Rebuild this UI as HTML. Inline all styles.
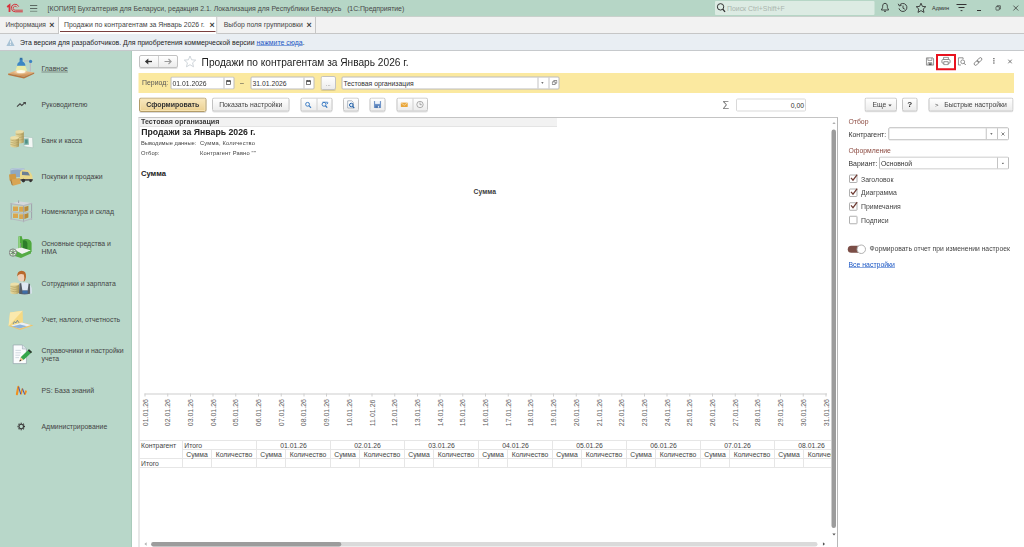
<!DOCTYPE html>
<html lang="ru"><head><meta charset="utf-8"><title>Продажи по контрагентам</title>
<style>
*{box-sizing:border-box;margin:0;padding:0}
html,body{width:1024px;height:547px;overflow:hidden;background:#fff}
body{font-family:"Liberation Sans",Arial,sans-serif;font-size:6.9px;color:#333;position:relative;line-height:1}
.a{position:absolute;white-space:nowrap}
.t{position:absolute;white-space:nowrap;line-height:10px;height:10px}
#titlebar{left:0;top:0;width:1024px;height:16px;background:#b6d6c6}
#tabbar{left:0;top:16px;width:1024px;height:18px;background:#f2f2f2;border-top:1px solid #c9d1cc;border-bottom:1px solid #c6c6c6}
#infobar{left:0;top:34px;width:1024px;height:17px;background:#e9eef3;border-bottom:1px solid #c6c9cc}
#side{left:0;top:51px;width:132px;height:496px;background:#b8d7c9;border-right:1px solid #a9cbbb}
.btn{position:absolute;height:14px;font-size:6.83px;border:1px solid #c2c2c2;border-radius:2px;background:linear-gradient(#ffffff,#ececec);box-shadow:0 1px 0 rgba(0,0,0,.12);text-align:center;line-height:12px;color:#444;white-space:nowrap}
.inp{position:absolute;height:13px;border:1px solid #bcbcbc;border-radius:1.5px;background:#fff;line-height:11.8px;padding-left:1px;color:#333;white-space:nowrap;font-size:6.8px}
.vd{position:absolute;top:0;width:1px;height:100%;background:#c4c4c4}
.sec{color:#333}
#root{position:absolute;left:0;top:0;width:1024px;height:547px;overflow:hidden}
@supports (zoom:4){#root{zoom:4;transform:scale(.25);transform-origin:0 0}}
</style></head><body><div id="root">

<!-- title bar -->
<div id="titlebar" class="a"></div>
<svg class="a" style="left:0;top:0" width="26" height="16" viewBox="0 0 26 16"><g fill="none" stroke="#d8323c"><path d="M7.2 7 L9.5 5.2 V12.1" stroke-width="1.8"/><path d="M18.7 6.6 A3.8 3.8 0 1 0 15.2 11.8 H22.8" stroke-width="1"/><path d="M17 7.4 A2 2 0 1 0 15.2 10.2 H22.8" stroke-width=".9"/></g></svg>
<div class="a" style="left:30px;top:5px;width:7.3px;height:.9px;background:#5b6a63;box-shadow:0 3px 0 #5b6a63,0 5.8px 0 #7d9186"></div>
<div class="t" style="left:47.5px;top:4px;font-size:6.95px;color:#484848;white-space:pre">[КОПИЯ] Бухгалтерия для Беларуси, редакция 2.1. Локализация для Республики Беларусь   <span style="letter-spacing:-.08px">(1С:Предприятие)</span></div>
<div class="a" style="left:715px;top:1px;width:159.5px;height:14px;background:#dcebe3;border-radius:1px"></div>
<svg class="a" style="left:716.2px;top:2.3px" width="10" height="11" viewBox="0 0 10 11"><circle cx="4.3" cy="4.6" r="3.2" fill="none" stroke="#333" stroke-width="1"/><path d="M6.6 7 L8.8 9.6" stroke="#333" stroke-width="1.3"/></svg>
<div class="t" style="left:727px;top:3.4px;font-size:6.9px;color:#a9b5ae">Поиск Ctrl+Shift+F</div>
<!-- right title icons -->
<svg class="a" style="left:880px;top:2px" width="10" height="12" viewBox="0 0 10 12"><path d="M5 1.3 C2.6 1.3 2.6 4 2.6 5.6 L1.4 8 H8.6 L7.4 5.6 C7.4 4 7.4 1.3 5 1.3 Z M4 9.3 H6" fill="none" stroke="#333" stroke-width=".9"/></svg>
<svg class="a" style="left:897px;top:2px" width="12" height="12" viewBox="0 0 12 12"><path d="M2.6 3.2 A4 4 0 1 1 2 6.4" fill="none" stroke="#333" stroke-width=".9"/><path d="M1.2 1.8 L2.4 4 L4.6 3.2" fill="none" stroke="#333" stroke-width=".9"/><path d="M6 3.6 V6.2 L7.8 7.2" fill="none" stroke="#333" stroke-width=".9"/></svg>
<svg class="a" style="left:915px;top:2px" width="12" height="12" viewBox="0 0 12 12"><path d="M6 1.2 L7.4 4.4 L10.8 4.7 L8.2 7 L9 10.4 L6 8.6 L3 10.4 L3.8 7 L1.2 4.7 L4.6 4.4 Z" fill="none" stroke="#333" stroke-width=".9" stroke-linejoin="round"/></svg>
<div class="t" style="left:932px;top:3.5px;font-size:5.6px;color:#333">Админ</div>
<svg class="a" style="left:956px;top:3px" width="11" height="10" viewBox="0 0 11 10"><path d="M0.5 1.5 H10.5 M2.5 4.5 H8.5 M4.6 7.6 H6.4" stroke="#333" stroke-width="1" fill="none"/></svg>
<div class="a" style="left:977px;top:10px;width:4px;height:1px;background:#333"></div>
<svg class="a" style="left:995.3px;top:5px" width="6" height="6" viewBox="0 0 8 8"><rect x=".8" y="2.2" width="4.6" height="4.6" fill="none" stroke="#333" stroke-width=".9" rx=".8"/><path d="M2.4 2 V1 H6.8 V5.4 H5.8" fill="none" stroke="#333" stroke-width=".9"/></svg>
<svg class="a" style="left:1012.6px;top:4.8px" width="6.6" height="6.6" viewBox="0 0 8 8"><path d="M1 1 L7 7 M7 1 L1 7" stroke="#333" stroke-width=".9"/></svg>

<!-- tab bar -->
<div id="tabbar" class="a"></div>
<div class="t" style="left:5.5px;top:20px;font-size:6.6px;color:#444">Информация</div>
<div class="t" style="left:49.5px;top:20px;font-size:8.8px;color:#3c3c3c;font-weight:bold;margin-left:-.2px;margin-top:-.3px">×</div>
<div class="a" style="left:58px;top:17px;width:159.2px;height:17px;background:#fff;border-left:1px solid #c6c6c6;border-right:1px solid #c6c6c6"></div>
<div class="a" style="left:60px;top:31px;width:155.6px;height:1px;background:#7a3f3f"></div>
<div class="t" style="left:64px;top:20px;font-size:6.9px;color:#444">Продажи по контрагентам за Январь 2026 г.</div>
<div class="t" style="left:209.6px;top:20px;font-size:8.8px;color:#3c3c3c;font-weight:bold;margin-left:-.2px;margin-top:-.3px">×</div>
<div class="t" style="left:223.7px;top:20px;font-size:6.87px;color:#444">Выбор поля группировки</div>
<div class="t" style="left:306.8px;top:20px;font-size:8.8px;color:#3c3c3c;font-weight:bold;margin-left:-.2px;margin-top:-.3px">×</div>
<div class="a" style="left:315px;top:17px;width:1px;height:16px;background:#c6c6c6"></div>

<!-- info bar -->
<div id="infobar" class="a"></div>
<svg class="a" style="left:6px;top:37.8px" width="9" height="9" viewBox="0 0 9 9"><path d="M4.5 .6 L8.6 8.2 H.4 Z" fill="#a9c3d6"/><path d="M4.5 3 V5.6 M4.5 6.4 V7.3" stroke="#e9eef3" stroke-width="1"/></svg>
<div class="t" style="left:19.9px;top:37.8px;font-size:6.92px;color:#222">Эта версия для разработчиков. Для приобретения коммерческой версии <span style="color:#1a56c4;text-decoration:underline">нажмите сюда</span>.</div>

<!-- sidebar -->
<div id="side" class="a"></div>
<!--SIDE--><!-- sidebar items -->
<!-- 1 lamp -->
<svg class="a" style="left:7px;top:56px" width="29" height="24" viewBox="0 0 29 24">
<defs><linearGradient id="gw" x1="0" y1="0" x2="0" y2="1"><stop offset="0" stop-color="#f2c99a"/><stop offset="1" stop-color="#c98a4e"/></linearGradient>
<radialGradient id="gl" cx=".5" cy=".4" r=".6"><stop offset="0" stop-color="#fffbe8"/><stop offset="1" stop-color="#f1c795" stop-opacity="0"/></radialGradient></defs>
<path d="M1.2 17.4 L10.5 13.8 L27.2 16.4 L17 20.8 Z" fill="url(#gw)"/>
<path d="M1.2 17.4 L17 20.8 L27.2 16.4 L27.2 17.8 L17 22.6 L1.2 18.9 Z" fill="#b9763f"/>
<ellipse cx="13.5" cy="16.6" rx="7" ry="2.4" fill="url(#gl)"/>
<path d="M8.4 14.6 L10.4 9.6 H18 L20.2 14.6 Q14 16.4 8.4 14.6Z" fill="#f6f0a0" opacity=".8"/>
<ellipse cx="14" cy="15.6" rx="4.5" ry="1.5" fill="#fffdf0" opacity=".9"/>
<path d="M17 5 H23.4 V15.4" fill="none" stroke="#b9bcc2" stroke-width="1.2"/>
<path d="M12.6 3.2 H15.6 V5.4 Q18.4 6.6 18.4 9.8 H10 Q10 6.6 12.6 5.4 Z" fill="#3c86c4"/>
<rect x="12.8" y="1.8" width="2.6" height="2" fill="#2f6fa8"/>
<circle cx="23.6" cy="5.4" r="1.6" fill="#3b83c2"/>
</svg>
<div class="t" style="left:41.5px;top:64px;color:#444;text-decoration:underline">Главное</div>
<!-- 2 trend -->
<svg class="a" style="left:16px;top:101px" width="11" height="7" viewBox="0 0 11 7"><path d="M1 5.6 L4 2.8 L5.8 4.4 L9.2 1.4" fill="none" stroke="#444" stroke-width="1.1"/><path d="M6.8 .9 H9.9 V3.8 Z" fill="#444"/></svg>
<div class="t" style="left:41.5px;top:99.8px;color:#444">Руководителю</div>
<!-- 3 coins -->
<svg class="a" style="left:9px;top:129px" width="26" height="20" viewBox="0 0 26 20">
<defs><linearGradient id="gc" x1="0" y1="0" x2="1" y2="0"><stop offset="0" stop-color="#e6d9a0"/><stop offset=".6" stop-color="#d3c282"/><stop offset="1" stop-color="#a9975a"/></linearGradient></defs>
<path d="M14.6 8 L23.6 8.6 L24 18.8 L15 17.6 Z" fill="#f3f7f5" stroke="#9fb8b0" stroke-width=".5"/>
<path d="M14.6 9.6 L19.6 9.2 L20 15.8 L15 16.2Z" fill="#8dbdb2"/><path d="M16 10.6 L18.6 10.4 L18.8 14.6 L16.2 14.8Z" fill="#4f8f86"/>
<path d="M6.6 2.4 V13.6 Q10.6 15.6 14.8 13.6 V2.4Z" fill="url(#gc)"/>
<ellipse cx="10.7" cy="2.4" rx="4.1" ry="1.5" fill="#e9dca6"/>
<path d="M6.6 5 Q10.7 6.8 14.8 5 M6.6 7.6 Q10.7 9.4 14.8 7.6 M6.6 10.2 Q10.7 12 14.8 10.2" fill="none" stroke="#a9975a" stroke-width=".5"/>
<path d="M1.4 8.6 V17.4 Q5.6 19.6 10 17.4 V8.6Z" fill="url(#gc)"/>
<ellipse cx="5.7" cy="8.6" rx="4.3" ry="1.6" fill="#ecdfa9"/>
<path d="M1.4 11 Q5.7 13 10 11 M1.4 13.2 Q5.7 15.2 10 13.2 M1.4 15.4 Q5.7 17.4 10 15.4" fill="none" stroke="#a9975a" stroke-width=".5"/>
</svg>
<div class="t" style="left:41.5px;top:135.5px;color:#444">Банк и касса</div>
<!-- 4 truck -->
<svg class="a" style="left:8px;top:166px" width="27" height="21" viewBox="0 0 27 21">
<path d="M2.4 3 Q9 1 16.4 2.6 V11 H2.4Z" fill="#8fa9c4"/>
<path d="M2.4 3 Q9 1 16.4 2.6 V4.2 Q9 2.8 2.4 4.4Z" fill="#b9cadb"/>
<path d="M12 6 Q13 3.6 17 3.8 L21 4.4 Q23.4 7.6 24.4 10 L24.6 14.4 L12 13.6Z" fill="#e9d88a"/>
<path d="M14 5.6 L20 6 L22 9.4 L14 9Z" fill="#6b7f94"/>
<rect x="12.4" y="13" width="12.4" height="1.8" fill="#555"/>
<circle cx="15.4" cy="14.6" r="1.8" fill="#333"/><circle cx="22.6" cy="14.8" r="1.4" fill="#333"/>
<path d="M1 8.6 L7.6 7.8 L8.6 13.4 L1.6 14.4Z" fill="#cf9a48"/>
<path d="M3.4 13.4 L11.6 12 L13 17.6 L5 19.8Z" fill="#d9a552"/>
<path d="M3.4 13.4 L5 19.8 L3.6 18.4 L2.2 14Z" fill="#a87530"/>
</svg>
<div class="t" style="left:41.5px;top:171.3px;color:#444">Покупки и продажи</div>
<!-- 5 shelf -->
<svg class="a" style="left:9px;top:200px" width="24" height="23" viewBox="0 0 24 23">
<path d="M1.4 3.2 L14.6 5.2 L23 3 L11 1.6Z" fill="#d5d8dc"/>
<g fill="#d9a64e"><path d="M4 6.6 H9 V11 H4Z M10.2 7 H15.6 V11.8 H10.2Z M4 13.6 H9 V18 H4Z M10.2 14.2 H15.6 V19 H10.2Z"/></g>
<g fill="#e9c27a"><path d="M4 6.6 L5.4 5.8 H10 L9 6.6Z M10.2 7 L11.6 6.2 H17 L15.6 7Z M4 13.6 L5.4 12.8 H10 L9 13.6Z M10.2 14.2 L11.6 13.4 H17 L15.6 14.2Z"/></g>
<g fill="#b98a3a"><path d="M15.6 7 L19.4 5.8 V10.4 L15.6 11.8Z M15.6 14.2 L19.4 13 V17.4 L15.6 19Z"/></g>
<g fill="none" stroke="#9ea3aa" stroke-width="1"><path d="M2.2 3 V19.4 M14.6 5 V22.2 M22.6 3 V19.6 M9.6 .4 V3"/></g>
<g fill="none" stroke="#b5b9bf" stroke-width="1.1"><path d="M1.4 3.6 L14.6 5.6 L23 3.4 M1.4 11.6 L14.6 13.4 L23 11.2 M1.4 18.8 L14.6 21.2 L23 18.6"/></g>
</svg>
<div class="t" style="left:41.5px;top:207px;color:#444">Номенклатура и склад</div>
<!-- 6 machine -->
<svg class="a" style="left:9px;top:235px" width="24" height="24" viewBox="0 0 24 24">
<path d="M9.4 1.6 L12.6 1 L13.6 4.6 L16 4 Q21.6 3.4 22.6 8 V17 L14 16.6 L9.4 14Z" fill="#4fa83e"/>
<path d="M9.4 1.6 L11 1.4 V14 L9.4 14Z" fill="#8fd17f"/>
<path d="M14 5.6 Q17.6 4.6 18.4 8 V14 H14Z" fill="#2e7d2a"/>
<path d="M5 14.6 L12 12.6 L22 15.6 L13 19Z" fill="#f1f3f1"/>
<path d="M5 14.6 L13 19 L22 15.6 V18.4 L12 23 L4 20.6Z" fill="#55ab45"/>
<circle cx="4" cy="17.6" r="3.7" fill="#e4e8e4" stroke="#6f6f6f" stroke-width=".8"/>
<path d="M4 14.4 V20.8 M1.2 16 L6.8 19.2 M1.2 19.2 L6.8 16" stroke="#4a8a44" stroke-width=".8"/><circle cx="4" cy="17.6" r="1" fill="#777"/>
<path d="M11.6 8 V13" stroke="#9a9a9a" stroke-width=".8"/>
</svg>
<div class="t" style="left:41.5px;top:238.8px;color:#444">Основные средства и</div>
<div class="t" style="left:41.5px;top:246.8px;color:#444">НМА</div>
<!-- 7 person -->
<svg class="a" style="left:9px;top:270px" width="24" height="26" viewBox="0 0 24 26">
<path d="M8.4 14.6 Q9.6 12.4 12.6 12.4 H16.4 Q21.6 13 22.6 18 L22.8 23.4 Q16 25.4 8.8 23.6Z" fill="#dfe8f3"/>
<path d="M10.4 13.4 L12.2 13 L13.4 20.6 H18.6 L19.6 13.4 L21 14 L21.2 23.8 Q15.6 25 10 23.8Z" fill="#555d66"/>
<path d="M13.4 20.6 H18.6 V23.6 H13.4Z" fill="#3f6ea8"/>
<ellipse cx="12.4" cy="7" rx="3.7" ry="4.6" fill="#f0cfb6"/>
<path d="M8.2 6.4 Q8 1.2 12.6 .8 Q17.4 .8 17 7 Q16.6 11 14.6 12.2 Q16 8 14.8 4.6 Q11.6 3.2 9.4 5 Z" fill="#b9692c"/>
<path d="M1.4 14 V23.2 Q5.6 25.4 10 23.2 V14Z" fill="url(#gc)"/>
<ellipse cx="5.7" cy="14" rx="4.3" ry="1.6" fill="#ecdfa9"/>
<path d="M1.4 16.4 Q5.7 18.4 10 16.4 M1.4 18.6 Q5.7 20.6 10 18.6 M1.4 20.8 Q5.7 22.8 10 20.8" fill="none" stroke="#a9975a" stroke-width=".5"/>
</svg>
<div class="t" style="left:41.5px;top:278.6px;color:#444">Сотрудники и зарплата</div>
<!-- 8 folder -->
<svg class="a" style="left:7px;top:310px" width="28" height="21" viewBox="0 0 28 21">
<path d="M3 2.6 L15.6 .8 L16 12.4 L1.6 16Z" fill="#f6d982"/>
<path d="M3 2.6 L15.6 .8 L9 8 L1.6 16Z" fill="#fae9ad"/>
<path d="M1.6 16 L16 12.4 L26.4 15.4 L13 20Z" fill="#eec56c"/>
<path d="M4 15.4 L15 12.6 L24 15 L12.6 18.6Z" fill="#e9f0f7"/>
<path d="M5 16.4 L12.6 18.6 L20 16.2 L13 14.6Z" fill="#8fb3d9"/>
<path d="M6 14 L7.4 11.6 L8.8 13 L10.4 10.4 L12 12.8" fill="none" stroke="#46709f" stroke-width=".7"/>
</svg>
<div class="t" style="left:41.5px;top:314.4px;color:#444">Учет, налоги, отчетность</div>
<!-- 9 doc pencil -->
<svg class="a" style="left:12px;top:344px" width="21" height="21" viewBox="0 0 21 21">
<path d="M1.2 1 H10.4 L14.4 5 V19.6 H1.2Z" fill="#fafcfd" stroke="#8d9aa6" stroke-width=".6"/>
<path d="M10.4 1 V5 H14.4" fill="#dfe6ec" stroke="#8d9aa6" stroke-width=".5"/>
<path d="M3.4 6.4 H9 M3.4 8.8 H9 M3.4 11.2 H8 M3.4 13.6 H7" stroke="#c2ccd6" stroke-width=".7"/>
<path d="M17 5.2 L20 8 L11.6 16 L8.6 13.2Z" fill="#35a64a"/>
<path d="M17 5.2 L20 8 L18.8 9.2 L15.8 6.4Z" fill="#333"/>
<path d="M8.6 13.2 L11.6 16 L7.4 17.4Z" fill="#e9c48d"/>
<path d="M7.4 17.4 L8 15.4 L9.4 16.8Z" fill="#333"/>
</svg>
<div class="t" style="left:41.5px;top:346px;color:#444">Справочники и настройки</div>
<div class="t" style="left:41.5px;top:354px;color:#444">учета</div>
<!-- 10 PS -->
<svg class="a" style="left:15px;top:385px" width="13" height="11" viewBox="0 0 13 11">
<g fill="none" stroke-linecap="round"><path d="M1.9 9.2 L3.3 1.9" stroke="#f0901e" stroke-width="2.1"/><path d="M5.9 8.8 L7.4 4" stroke="#f0901e" stroke-width="1.7"/><path d="M9.9 9 L10.9 6.4" stroke="#f0901e" stroke-width="2"/>
<path d="M3.7 2.2 L5.6 8.8" stroke="#4455b0" stroke-width="1"/><path d="M7.6 4 L9.4 8.8" stroke="#4455b0" stroke-width="1"/></g>
</svg>
<div class="t" style="left:41.5px;top:386px;color:#444">PS: База знаний</div>
<!-- 11 gear -->
<svg class="a" style="left:16.8px;top:422.1px" width="9" height="9" viewBox="0 0 9 9"><circle cx="4.5" cy="4.5" r="2.25" fill="none" stroke="#3c3c3c" stroke-width="1.1"/><path d="M7.20 4.50 L8.25 4.50 M6.41 6.41 L7.15 7.15 M4.50 7.20 L4.50 8.25 M2.59 6.41 L1.85 7.15 M1.80 4.50 L0.75 4.50 M2.59 2.59 L1.85 1.85 M4.50 1.80 L4.50 0.75 M6.41 2.59 L7.15 1.85" stroke="#3c3c3c" stroke-width="1.35" fill="none"/></svg>
<div class="t" style="left:41.5px;top:421.5px;color:#444">Администрирование</div>
<!--/SIDE-->

<!-- main header -->
<!--MAIN--><!-- main header -->
<div class="btn" style="left:139px;top:55px;width:39px;height:13px"></div>
<div class="a" style="left:158px;top:56px;width:1px;height:11px;background:#d0d0d0"></div>
<svg class="a" style="left:144px;top:58px" width="9" height="7" viewBox="0 0 9 7"><path d="M8 3.5 H2.6" fill="none" stroke="#333" stroke-width="1.3"/><path d="M4.3 .6 L.9 3.5 L4.3 6.4Z" fill="#333"/></svg>
<svg class="a" style="left:163.5px;top:58px" width="9" height="7" viewBox="0 0 9 7"><path d="M1 3.5 H7.4 M5 1 L7.6 3.5 L5 6" fill="none" stroke="#9a9a9a" stroke-width="1.1"/></svg>
<svg class="a" style="left:183.5px;top:55px" width="13" height="13" viewBox="0 0 13 13"><path d="M6.5 1 L8.1 4.8 L12.2 5.1 L9.1 7.8 L10 11.8 L6.5 9.7 L3 11.8 L3.9 7.8 L.8 5.1 L4.9 4.8 Z" fill="none" stroke="#c3cad1" stroke-width=".8" stroke-linejoin="round"/></svg>
<div class="a" style="left:201.6px;top:54.9px;font-size:10.15px;line-height:14px;color:#1c1c1c">Продажи по контрагентам за Январь 2026 г.</div>

<!-- top right icons -->
<svg class="a" style="left:925.5px;top:57px" width="9" height="9" viewBox="0 0 9 9"><path d="M.9 .9 H7.4 L8.1 1.6 V8.1 H.9Z" fill="none" stroke="#767676" stroke-width=".8"/><path d="M2.4 .9 V3.4 H6.4 V.9 M2.6 8 V5.6 H6.4 V8" fill="none" stroke="#767676" stroke-width=".7"/><rect x="3.4" y="6.3" width="2.6" height="1.8" fill="#555"/></svg>
<div class="a" style="left:936px;top:54px;width:20px;height:16.2px;border:2.2px solid #e8131f"></div>
<svg class="a" style="left:941px;top:56.5px" width="10" height="9" viewBox="0 0 10 9"><path d="M2.6 3 V.8 H7.4 V3" fill="none" stroke="#767676" stroke-width=".8"/><rect x=".9" y="3" width="8.2" height="3.8" rx="1.2" fill="none" stroke="#767676" stroke-width=".8"/><path d="M2.8 5.2 H7.2 V8.2 H2.8Z" fill="#fff" stroke="#767676" stroke-width=".8"/></svg>
<svg class="a" style="left:957.5px;top:57px" width="9" height="9" viewBox="0 0 9 9"><path d="M5.6 .8 H.9 V8 H3.4" fill="none" stroke="#767676" stroke-width=".8"/><path d="M5.6 .8 V2" fill="none" stroke="#767676" stroke-width=".8"/><circle cx="5.2" cy="4.8" r="1.9" fill="none" stroke="#767676" stroke-width=".8"/><path d="M6.6 6.2 L8.2 8" stroke="#767676" stroke-width=".9"/></svg>
<svg class="a" style="left:973px;top:56.5px" width="10" height="10" viewBox="0 0 10 10"><g fill="none" stroke="#777" stroke-width=".85"><rect x="-2.7" y="-1.45" width="5.4" height="2.9" rx="1.45" transform="translate(6.5 3.5) rotate(-45)"/><rect x="-2.7" y="-1.45" width="5.4" height="2.9" rx="1.45" transform="translate(3.5 6.5) rotate(-45)"/></g></svg>
<div class="a" style="left:993.3px;top:58px;width:1.2px;height:1.3px;background:#555;box-shadow:0 2.2px 0 #555,0 4.4px 0 #555"></div>
<svg class="a" style="left:1007.5px;top:59px" width="5" height="5" viewBox="0 0 5 5"><path d="M.6 .6 L4.4 4.4 M4.4 .6 L.6 4.4" stroke="#555" stroke-width=".8"/></svg>

<!-- yellow band -->
<div class="a" style="left:138.5px;top:73px;width:875.5px;height:20px;background:#fbe9a0"></div>
<div class="t" style="left:142px;top:78px;color:#555">Период:</div>
<div class="inp" style="left:170.5px;top:76.5px;width:64px">01.01.2026<div class="vd" style="left:52px"></div></div>
<svg class="a" style="left:226px;top:79.7px" width="5.2" height="5.2" viewBox="0 0 6 6"><rect x=".7" y="1.2" width="4.6" height="4.1" fill="none" stroke="#444" stroke-width=".8"/><rect x=".7" y="1" width="4.6" height="1.4" fill="#444"/><path d="M1.8 .2 V1.4 M4.2 .2 V1.4" stroke="#444" stroke-width=".7"/></svg>
<div class="t" style="left:240px;top:78px;color:#444">–</div>
<div class="inp" style="left:250.5px;top:76.5px;width:64px">31.01.2026<div class="vd" style="left:52px"></div></div>
<svg class="a" style="left:306px;top:79.7px" width="5.2" height="5.2" viewBox="0 0 6 6"><rect x=".7" y="1.2" width="4.6" height="4.1" fill="none" stroke="#444" stroke-width=".8"/><rect x=".7" y="1" width="4.6" height="1.4" fill="#444"/><path d="M1.8 .2 V1.4 M4.2 .2 V1.4" stroke="#444" stroke-width=".7"/></svg>
<div class="btn" style="left:320.5px;top:76px;width:15.5px;line-height:13px;color:#666;font-size:6px">...</div>
<div class="inp" style="left:341.5px;top:76.5px;width:218px">Тестовая организация<div class="vd" style="left:195px"></div><div class="vd" style="left:206px"></div></div>
<svg class="a" style="left:541.1px;top:82.0px" width="2.8" height="2.1" viewBox="0 0 4 3"><path d="M.3 .4 H3.7 L2 2.6Z" fill="#444"/></svg>
<svg class="a" style="left:551.8px;top:80px" width="5.8" height="5" viewBox="0 0 7 6"><path d="M.6 2.2 H4.2 V5.4 H.6Z M2.4 2 V.6 H6.2 V3.8 H4.4" fill="none" stroke="#444" stroke-width=".7"/></svg>

<!-- command bar -->
<div class="btn" style="left:139px;top:97.5px;width:67.5px;height:14.5px;border-color:#b39c68;background:linear-gradient(#f9e9c0,#ebd092);color:#333;font-weight:bold;font-size:6.97px;line-height:12.5px;box-shadow:inset 0 0 0 1px #f7e3b0,0 1px 0 rgba(0,0,0,.15)">Сформировать</div>
<div class="btn" style="left:212px;top:97.5px;width:77.5px">Показать настройки</div>
<div class="btn" style="left:300.5px;top:97.5px;width:32px"></div>
<div class="a" style="left:316.5px;top:98.5px;width:1px;height:12px;background:#d0d0d0"></div>
<svg class="a" style="left:304.8px;top:101.4px" width="7" height="7" viewBox="0 0 8 8"><circle cx="3.2" cy="3.2" r="2.2" fill="none" stroke="#2f74c0" stroke-width="1"/><path d="M4.8 4.8 L7.2 7.2" stroke="#2f74c0" stroke-width="1.3"/></svg>
<svg class="a" style="left:321px;top:101.2px" width="8" height="7.2" viewBox="0 0 9 8"><circle cx="3.4" cy="3.4" r="2.2" fill="none" stroke="#2f74c0" stroke-width="1"/><path d="M5 5 L7 7.2" stroke="#2f74c0" stroke-width="1.3"/><path d="M1.6 .9 H7.4" stroke="#2f74c0" stroke-width=".9"/><path d="M6 1.4 H8.4 L7.2 3.2Z" fill="#2f74c0"/></svg>
<div class="btn" style="left:343px;top:97.5px;width:16px"></div>
<svg class="a" style="left:346.5px;top:100px" width="9" height="9" viewBox="0 0 9 9"><path d="M1.2 .8 H5.2 L6.8 2.4 V8 H1.2Z" fill="#fff" stroke="#8a97a6" stroke-width=".7"/><circle cx="4.8" cy="5" r="1.8" fill="#dbe9f7" stroke="#1f5fa8" stroke-width="1"/><path d="M6.1 6.3 L7.8 8.2" stroke="#1f5fa8" stroke-width="1.2"/></svg>
<div class="btn" style="left:369.5px;top:97.5px;width:16px"></div>
<svg class="a" style="left:373.5px;top:100.5px" width="8" height="8" viewBox="0 0 8 8"><rect x=".4" y=".4" width="7.2" height="7.2" rx=".6" fill="#6f94c8"/><rect x="1.6" y=".4" width="4.8" height="3" fill="#eef3fa"/><rect x="1.8" y="5" width="4.4" height="2.6" fill="#4f78b2"/><rect x="4.4" y="5.4" width="1.2" height="1.8" fill="#dfe7f2"/></svg>
<div class="btn" style="left:396.5px;top:97.5px;width:31.5px"></div>
<div class="a" style="left:412.5px;top:98.5px;width:1px;height:12px;background:#d0d0d0"></div>
<svg class="a" style="left:400.2px;top:102.2px" width="8" height="5" viewBox="0 0 9 6"><rect x=".3" y=".3" width="8.4" height="5.4" rx=".5" fill="#e9a63a"/><path d="M.6 .8 L4.5 3.6 L8.4 .8" fill="none" stroke="#fbe7bf" stroke-width=".8"/></svg>
<svg class="a" style="left:416px;top:100.5px" width="8" height="8" viewBox="0 0 8 8"><circle cx="4" cy="4" r="3.2" fill="#f4f4f4" stroke="#9a9a9a" stroke-width=".8"/><path d="M4 2 V4.2 H5.8" fill="none" stroke="#888" stroke-width=".7"/></svg>

<div class="a" style="left:722.5px;top:98px;font-size:11px;line-height:14px;color:#777;transform:scaleX(.98);transform-origin:0 0">Σ</div>
<div class="inp" style="left:736px;top:98.5px;width:70px;border-color:#d9d9d9;text-align:right;padding-right:1px">0,00</div>
<div class="btn" style="left:864.5px;top:97.5px;width:32.5px;text-align:left;padding-left:7px">Еще</div>
<svg class="a" style="left:888px;top:104px" width="4" height="3" viewBox="0 0 4 3"><path d="M.3 .4 H3.7 L2 2.4Z" fill="#555"/></svg>
<div class="btn" style="left:902px;top:97.5px;width:15.5px;font-weight:bold;color:#333;font-size:8.1px">?</div>
<div class="btn" style="left:928.5px;top:97.5px;width:85px;text-align:left;padding-left:5.5px;white-space:pre"><span style="font-size:6px;position:relative;top:-.3px">&gt;</span>   Быстрые настройки</div>

<!-- spreadsheet frame -->
<div class="a" style="left:138.5px;top:117px;width:699.5px;height:431px;border:1px solid #d2d2d2;border-right-color:#b8b8b8;border-top-color:#c4c4c4;border-bottom:none;background:#fff"></div>
<div class="a" style="left:139.5px;top:118px;width:417.5px;height:9px;background:#f2f2f2;border-bottom:1px solid #e4e4e4"></div>
<div class="t" style="left:141px;top:116.6px;font-size:7.1px;font-weight:bold;color:#3a3a3a">Тестовая организация</div>
<div class="a" style="left:141.3px;top:125.5px;font-size:8.7px;line-height:13px;font-weight:bold;color:#222">Продажи за Январь 2026 г.</div>
<div class="t" style="left:141px;top:138.3px;font-size:5.76px;color:#444">Выводимые данные:</div>
<div class="t" style="left:200px;top:138.3px;font-size:5.76px;letter-spacing:.17px;color:#444">Сумма, Количество</div>
<div class="t" style="left:141px;top:147.5px;font-size:5.76px;color:#444">Отбор:</div>
<div class="t" style="left:200px;top:147.5px;font-size:5.76px;letter-spacing:.13px;color:#444">Контрагент Равно ""</div>
<div class="a" style="left:141px;top:167.5px;font-size:7.6px;line-height:12px;font-weight:bold;color:#222">Сумма</div>
<div class="a" style="left:473.6px;top:185.5px;font-size:6.8px;line-height:12px;font-weight:bold;color:#3c3c3c">Сумма</div>

<!-- chart axis -->
<div class="a" style="left:144.5px;top:393.5px;width:682.5px;height:1px;background:#cecece"></div>
<div class="a" style="left:144.5px;top:393.5px;width:1px;height:3px;background:#cecece"></div>
<div class="a" style="left:141.2px;top:426.2px;width:27.3px;height:8px;line-height:8px;font-size:7px;color:#606060;transform-origin:0 0;transform:rotate(-90deg)">01.01.26</div>
<div class="a" style="left:167.2px;top:393.5px;width:1px;height:3px;background:#cecece"></div>
<div class="a" style="left:163.9px;top:426.2px;width:27.3px;height:8px;line-height:8px;font-size:7px;color:#606060;transform-origin:0 0;transform:rotate(-90deg)">02.01.26</div>
<div class="a" style="left:189.9px;top:393.5px;width:1px;height:3px;background:#cecece"></div>
<div class="a" style="left:186.6px;top:426.2px;width:27.3px;height:8px;line-height:8px;font-size:7px;color:#606060;transform-origin:0 0;transform:rotate(-90deg)">03.01.26</div>
<div class="a" style="left:212.6px;top:393.5px;width:1px;height:3px;background:#cecece"></div>
<div class="a" style="left:209.3px;top:426.2px;width:27.3px;height:8px;line-height:8px;font-size:7px;color:#606060;transform-origin:0 0;transform:rotate(-90deg)">04.01.26</div>
<div class="a" style="left:235.3px;top:393.5px;width:1px;height:3px;background:#cecece"></div>
<div class="a" style="left:232.0px;top:426.2px;width:27.3px;height:8px;line-height:8px;font-size:7px;color:#606060;transform-origin:0 0;transform:rotate(-90deg)">05.01.26</div>
<div class="a" style="left:258.0px;top:393.5px;width:1px;height:3px;background:#cecece"></div>
<div class="a" style="left:254.7px;top:426.2px;width:27.3px;height:8px;line-height:8px;font-size:7px;color:#606060;transform-origin:0 0;transform:rotate(-90deg)">06.01.26</div>
<div class="a" style="left:280.7px;top:393.5px;width:1px;height:3px;background:#cecece"></div>
<div class="a" style="left:277.4px;top:426.2px;width:27.3px;height:8px;line-height:8px;font-size:7px;color:#606060;transform-origin:0 0;transform:rotate(-90deg)">07.01.26</div>
<div class="a" style="left:303.4px;top:393.5px;width:1px;height:3px;background:#cecece"></div>
<div class="a" style="left:300.1px;top:426.2px;width:27.3px;height:8px;line-height:8px;font-size:7px;color:#606060;transform-origin:0 0;transform:rotate(-90deg)">08.01.26</div>
<div class="a" style="left:326.1px;top:393.5px;width:1px;height:3px;background:#cecece"></div>
<div class="a" style="left:322.8px;top:426.2px;width:27.3px;height:8px;line-height:8px;font-size:7px;color:#606060;transform-origin:0 0;transform:rotate(-90deg)">09.01.26</div>
<div class="a" style="left:348.8px;top:393.5px;width:1px;height:3px;background:#cecece"></div>
<div class="a" style="left:345.5px;top:426.2px;width:27.3px;height:8px;line-height:8px;font-size:7px;color:#606060;transform-origin:0 0;transform:rotate(-90deg)">10.01.26</div>
<div class="a" style="left:371.5px;top:393.5px;width:1px;height:3px;background:#cecece"></div>
<div class="a" style="left:368.2px;top:426.2px;width:27.3px;height:8px;line-height:8px;font-size:7px;color:#606060;transform-origin:0 0;transform:rotate(-90deg)">11.01.26</div>
<div class="a" style="left:394.2px;top:393.5px;width:1px;height:3px;background:#cecece"></div>
<div class="a" style="left:390.9px;top:426.2px;width:27.3px;height:8px;line-height:8px;font-size:7px;color:#606060;transform-origin:0 0;transform:rotate(-90deg)">12.01.26</div>
<div class="a" style="left:416.9px;top:393.5px;width:1px;height:3px;background:#cecece"></div>
<div class="a" style="left:413.6px;top:426.2px;width:27.3px;height:8px;line-height:8px;font-size:7px;color:#606060;transform-origin:0 0;transform:rotate(-90deg)">13.01.26</div>
<div class="a" style="left:439.6px;top:393.5px;width:1px;height:3px;background:#cecece"></div>
<div class="a" style="left:436.3px;top:426.2px;width:27.3px;height:8px;line-height:8px;font-size:7px;color:#606060;transform-origin:0 0;transform:rotate(-90deg)">14.01.26</div>
<div class="a" style="left:462.3px;top:393.5px;width:1px;height:3px;background:#cecece"></div>
<div class="a" style="left:459.0px;top:426.2px;width:27.3px;height:8px;line-height:8px;font-size:7px;color:#606060;transform-origin:0 0;transform:rotate(-90deg)">15.01.26</div>
<div class="a" style="left:485.0px;top:393.5px;width:1px;height:3px;background:#cecece"></div>
<div class="a" style="left:481.7px;top:426.2px;width:27.3px;height:8px;line-height:8px;font-size:7px;color:#606060;transform-origin:0 0;transform:rotate(-90deg)">16.01.26</div>
<div class="a" style="left:507.7px;top:393.5px;width:1px;height:3px;background:#cecece"></div>
<div class="a" style="left:504.4px;top:426.2px;width:27.3px;height:8px;line-height:8px;font-size:7px;color:#606060;transform-origin:0 0;transform:rotate(-90deg)">17.01.26</div>
<div class="a" style="left:530.4px;top:393.5px;width:1px;height:3px;background:#cecece"></div>
<div class="a" style="left:527.1px;top:426.2px;width:27.3px;height:8px;line-height:8px;font-size:7px;color:#606060;transform-origin:0 0;transform:rotate(-90deg)">18.01.26</div>
<div class="a" style="left:553.1px;top:393.5px;width:1px;height:3px;background:#cecece"></div>
<div class="a" style="left:549.8px;top:426.2px;width:27.3px;height:8px;line-height:8px;font-size:7px;color:#606060;transform-origin:0 0;transform:rotate(-90deg)">19.01.26</div>
<div class="a" style="left:575.8px;top:393.5px;width:1px;height:3px;background:#cecece"></div>
<div class="a" style="left:572.5px;top:426.2px;width:27.3px;height:8px;line-height:8px;font-size:7px;color:#606060;transform-origin:0 0;transform:rotate(-90deg)">20.01.26</div>
<div class="a" style="left:598.5px;top:393.5px;width:1px;height:3px;background:#cecece"></div>
<div class="a" style="left:595.2px;top:426.2px;width:27.3px;height:8px;line-height:8px;font-size:7px;color:#606060;transform-origin:0 0;transform:rotate(-90deg)">21.01.26</div>
<div class="a" style="left:621.2px;top:393.5px;width:1px;height:3px;background:#cecece"></div>
<div class="a" style="left:617.9px;top:426.2px;width:27.3px;height:8px;line-height:8px;font-size:7px;color:#606060;transform-origin:0 0;transform:rotate(-90deg)">22.01.26</div>
<div class="a" style="left:643.9px;top:393.5px;width:1px;height:3px;background:#cecece"></div>
<div class="a" style="left:640.6px;top:426.2px;width:27.3px;height:8px;line-height:8px;font-size:7px;color:#606060;transform-origin:0 0;transform:rotate(-90deg)">23.01.26</div>
<div class="a" style="left:666.6px;top:393.5px;width:1px;height:3px;background:#cecece"></div>
<div class="a" style="left:663.3px;top:426.2px;width:27.3px;height:8px;line-height:8px;font-size:7px;color:#606060;transform-origin:0 0;transform:rotate(-90deg)">24.01.26</div>
<div class="a" style="left:689.3px;top:393.5px;width:1px;height:3px;background:#cecece"></div>
<div class="a" style="left:686.0px;top:426.2px;width:27.3px;height:8px;line-height:8px;font-size:7px;color:#606060;transform-origin:0 0;transform:rotate(-90deg)">25.01.26</div>
<div class="a" style="left:712.0px;top:393.5px;width:1px;height:3px;background:#cecece"></div>
<div class="a" style="left:708.7px;top:426.2px;width:27.3px;height:8px;line-height:8px;font-size:7px;color:#606060;transform-origin:0 0;transform:rotate(-90deg)">26.01.26</div>
<div class="a" style="left:734.7px;top:393.5px;width:1px;height:3px;background:#cecece"></div>
<div class="a" style="left:731.4px;top:426.2px;width:27.3px;height:8px;line-height:8px;font-size:7px;color:#606060;transform-origin:0 0;transform:rotate(-90deg)">27.01.26</div>
<div class="a" style="left:757.4px;top:393.5px;width:1px;height:3px;background:#cecece"></div>
<div class="a" style="left:754.1px;top:426.2px;width:27.3px;height:8px;line-height:8px;font-size:7px;color:#606060;transform-origin:0 0;transform:rotate(-90deg)">28.01.26</div>
<div class="a" style="left:780.1px;top:393.5px;width:1px;height:3px;background:#cecece"></div>
<div class="a" style="left:776.8px;top:426.2px;width:27.3px;height:8px;line-height:8px;font-size:7px;color:#606060;transform-origin:0 0;transform:rotate(-90deg)">29.01.26</div>
<div class="a" style="left:802.8px;top:393.5px;width:1px;height:3px;background:#cecece"></div>
<div class="a" style="left:799.5px;top:426.2px;width:27.3px;height:8px;line-height:8px;font-size:7px;color:#606060;transform-origin:0 0;transform:rotate(-90deg)">30.01.26</div>
<div class="a" style="left:825.5px;top:393.5px;width:1px;height:3px;background:#cecece"></div>
<div class="a" style="left:822.2px;top:426.2px;width:27.3px;height:8px;line-height:8px;font-size:7px;color:#606060;transform-origin:0 0;transform:rotate(-90deg)">31.01.26</div>
<!-- table -->
<div class="a" style="left:139.5px;top:440.0px;width:691.5px;height:1px;background:#e6e6e6"></div>
<div class="a" style="left:182.0px;top:449.0px;width:649.0px;height:1px;background:#e6e6e6"></div>
<div class="a" style="left:139.5px;top:458.0px;width:691.5px;height:1px;background:#e6e6e6"></div>
<div class="a" style="left:139.5px;top:467.0px;width:691.5px;height:1px;background:#e6e6e6"></div>
<div class="a" style="left:182.0px;top:440.0px;width:1px;height:27.5px;background:#e6e6e6"></div>
<div class="a" style="left:211.0px;top:449.0px;width:1px;height:18.5px;background:#e6e6e6"></div>
<div class="a" style="left:256.0px;top:440.0px;width:1px;height:27.5px;background:#e6e6e6"></div>
<div class="a" style="left:285.0px;top:449.0px;width:1px;height:18.5px;background:#e6e6e6"></div>
<div class="a" style="left:330.0px;top:440.0px;width:1px;height:27.5px;background:#e6e6e6"></div>
<div class="a" style="left:359.0px;top:449.0px;width:1px;height:18.5px;background:#e6e6e6"></div>
<div class="a" style="left:404.0px;top:440.0px;width:1px;height:27.5px;background:#e6e6e6"></div>
<div class="a" style="left:433.0px;top:449.0px;width:1px;height:18.5px;background:#e6e6e6"></div>
<div class="a" style="left:478.0px;top:440.0px;width:1px;height:27.5px;background:#e6e6e6"></div>
<div class="a" style="left:507.0px;top:449.0px;width:1px;height:18.5px;background:#e6e6e6"></div>
<div class="a" style="left:552.0px;top:440.0px;width:1px;height:27.5px;background:#e6e6e6"></div>
<div class="a" style="left:581.0px;top:449.0px;width:1px;height:18.5px;background:#e6e6e6"></div>
<div class="a" style="left:626.0px;top:440.0px;width:1px;height:27.5px;background:#e6e6e6"></div>
<div class="a" style="left:655.0px;top:449.0px;width:1px;height:18.5px;background:#e6e6e6"></div>
<div class="a" style="left:700.0px;top:440.0px;width:1px;height:27.5px;background:#e6e6e6"></div>
<div class="a" style="left:729.0px;top:449.0px;width:1px;height:18.5px;background:#e6e6e6"></div>
<div class="a" style="left:774.0px;top:440.0px;width:1px;height:27.5px;background:#e6e6e6"></div>
<div class="a" style="left:803.0px;top:449.0px;width:1px;height:18.5px;background:#e6e6e6"></div>
<div class="t" style="left:141.0px;top:440.3px;color:#444;font-size:6.8px">Контрагент</div>
<div class="t" style="left:184.3px;top:440.3px;color:#444;font-size:6.8px">Итого</div>
<div class="t" style="left:141.0px;top:458.4px;color:#444;font-size:6.8px">Итого</div>
<div class="t" style="left:182.0px;top:449.3px;width:30.0px;text-align:center;color:#444;font-size:6.8px">Сумма</div>
<div class="t" style="left:211.0px;top:449.3px;width:46.0px;text-align:center;color:#444;font-size:6.8px">Количество</div>
<div class="t" style="left:256.0px;top:440.3px;width:75.0px;text-align:center;color:#444;font-size:6.8px">01.01.26</div>
<div class="t" style="left:256.0px;top:449.3px;width:30.0px;text-align:center;color:#444;font-size:6.8px">Сумма</div>
<div class="t" style="left:285.0px;top:449.3px;width:46.0px;text-align:center;color:#444;font-size:6.8px">Количество</div>
<div class="t" style="left:330.0px;top:440.3px;width:75.0px;text-align:center;color:#444;font-size:6.8px">02.01.26</div>
<div class="t" style="left:330.0px;top:449.3px;width:30.0px;text-align:center;color:#444;font-size:6.8px">Сумма</div>
<div class="t" style="left:359.0px;top:449.3px;width:46.0px;text-align:center;color:#444;font-size:6.8px">Количество</div>
<div class="t" style="left:404.0px;top:440.3px;width:75.0px;text-align:center;color:#444;font-size:6.8px">03.01.26</div>
<div class="t" style="left:404.0px;top:449.3px;width:30.0px;text-align:center;color:#444;font-size:6.8px">Сумма</div>
<div class="t" style="left:433.0px;top:449.3px;width:46.0px;text-align:center;color:#444;font-size:6.8px">Количество</div>
<div class="t" style="left:478.0px;top:440.3px;width:75.0px;text-align:center;color:#444;font-size:6.8px">04.01.26</div>
<div class="t" style="left:478.0px;top:449.3px;width:30.0px;text-align:center;color:#444;font-size:6.8px">Сумма</div>
<div class="t" style="left:507.0px;top:449.3px;width:46.0px;text-align:center;color:#444;font-size:6.8px">Количество</div>
<div class="t" style="left:552.0px;top:440.3px;width:75.0px;text-align:center;color:#444;font-size:6.8px">05.01.26</div>
<div class="t" style="left:552.0px;top:449.3px;width:30.0px;text-align:center;color:#444;font-size:6.8px">Сумма</div>
<div class="t" style="left:581.0px;top:449.3px;width:46.0px;text-align:center;color:#444;font-size:6.8px">Количество</div>
<div class="t" style="left:626.0px;top:440.3px;width:75.0px;text-align:center;color:#444;font-size:6.8px">06.01.26</div>
<div class="t" style="left:626.0px;top:449.3px;width:30.0px;text-align:center;color:#444;font-size:6.8px">Сумма</div>
<div class="t" style="left:655.0px;top:449.3px;width:46.0px;text-align:center;color:#444;font-size:6.8px">Количество</div>
<div class="t" style="left:700.0px;top:440.3px;width:75.0px;text-align:center;color:#444;font-size:6.8px">07.01.26</div>
<div class="t" style="left:700.0px;top:449.3px;width:30.0px;text-align:center;color:#444;font-size:6.8px">Сумма</div>
<div class="t" style="left:729.0px;top:449.3px;width:46.0px;text-align:center;color:#444;font-size:6.8px">Количество</div>
<div class="a" style="left:774.0px;top:440.3px;width:57.0px;height:30px;overflow:hidden">
<div class="t" style="left:0;top:0;width:75px;text-align:center;color:#444;font-size:6.8px">08.01.26</div>
<div class="t" style="left:0;top:9px;width:30px;text-align:center;color:#444;font-size:6.8px">Сумма</div>
<div class="t" style="left:29px;top:9px;width:46px;text-align:center;color:#444;font-size:6.8px">Количество</div></div>

<!-- scrollbars -->
<svg class="a" style="left:832px;top:121.5px" width="4" height="3" viewBox="0 0 4 3"><path d="M2 .4 L3.7 2.6 H.3Z" fill="#b0b0b0"/></svg>
<div class="a" style="left:831.5px;top:129.5px;width:4.5px;height:398.5px;background:#9c9c9c;border-radius:2.2px"></div>
<svg class="a" style="left:832px;top:533px" width="4" height="3" viewBox="0 0 4 3"><path d="M.3 .4 H3.7 L2 2.6Z" fill="#555"/></svg>
<div class="a" style="left:151px;top:542.1px;width:666.5px;height:4.3px;background:#dadada;border-radius:2.2px"></div>
<div class="a" style="left:151.2px;top:542.1px;width:190px;height:4.3px;background:#9c9c9c;border-radius:2.2px"></div>
<svg class="a" style="left:144px;top:542px" width="3" height="4" viewBox="0 0 3 4"><path d="M2.6 .3 V3.7 L.4 2Z" fill="#b0b0b0"/></svg>
<svg class="a" style="left:822.5px;top:542px" width="3" height="4" viewBox="0 0 3 4"><path d="M.4 .3 V3.7 L2.6 2Z" fill="#555"/></svg>

<!-- right panel -->
<div class="t" style="left:848.5px;top:116.3px;color:#8c4a40;font-size:6.83px">Отбор</div>
<div class="t" style="left:848.5px;top:129.3px;color:#333">Контрагент:</div>
<div class="inp" style="left:888.3px;top:127.3px;width:120.7px"><div class="vd" style="left:96.5px"></div><div class="vd" style="left:107.7px"></div></div>
<svg class="a" style="left:990.1px;top:132.9px" width="2.8" height="2.1" viewBox="0 0 4 3"><path d="M.3 .4 H3.7 L2 2.6Z" fill="#444"/></svg>
<svg class="a" style="left:1001px;top:132px" width="4" height="4" viewBox="0 0 4 4"><path d="M.5 .5 L3.5 3.5 M3.5 .5 L.5 3.5" stroke="#555" stroke-width=".7"/></svg>
<div class="t" style="left:848.5px;top:145.3px;color:#8c4a40;font-size:6.83px">Оформление</div>
<div class="t" style="left:848.5px;top:158.3px;color:#333">Вариант:</div>
<div class="inp" style="left:879px;top:156.5px;width:130px">Основной<div class="vd" style="left:117px"></div></div>
<svg class="a" style="left:1001.6px;top:162.4px" width="2.8" height="2.1" viewBox="0 0 4 3"><path d="M.3 .4 H3.7 L2 2.6Z" fill="#444"/></svg>
<div class="a" style="left:849px;top:174.6px;width:8.5px;height:8.5px;border:1px solid #b0b0b0;border-radius:1px;background:#fff"></div>
<svg class="a" style="left:850px;top:174.0px" width="8" height="8" viewBox="0 0 8 8"><path d="M1 3.8 L3 6.2 L7.2 .6" fill="none" stroke="#6e3b33" stroke-width="1.25"/></svg>
<div class="t" style="left:861px;top:174.2px;color:#444">Заголовок</div>
<div class="a" style="left:849px;top:188.6px;width:8.5px;height:8.5px;border:1px solid #b0b0b0;border-radius:1px;background:#fff"></div>
<svg class="a" style="left:850px;top:188.0px" width="8" height="8" viewBox="0 0 8 8"><path d="M1 3.8 L3 6.2 L7.2 .6" fill="none" stroke="#6e3b33" stroke-width="1.25"/></svg>
<div class="t" style="left:861px;top:187.8px;color:#444">Диаграмма</div>
<div class="a" style="left:849px;top:202.2px;width:8.5px;height:8.5px;border:1px solid #b0b0b0;border-radius:1px;background:#fff"></div>
<svg class="a" style="left:850px;top:201.6px" width="8" height="8" viewBox="0 0 8 8"><path d="M1 3.8 L3 6.2 L7.2 .6" fill="none" stroke="#6e3b33" stroke-width="1.25"/></svg>
<div class="t" style="left:861px;top:201.8px;color:#444">Примечания</div>
<div class="a" style="left:849px;top:215.8px;width:8.5px;height:8.5px;border:1px solid #b0b0b0;border-radius:1px;background:#fff"></div>
<div class="t" style="left:861px;top:215.4px;color:#444">Подписи</div>
<div class="a" style="left:847.8px;top:245.8px;width:17px;height:7px;border-radius:3.5px;background:#7b4e47"></div>
<div class="a" style="left:856.4px;top:244.5px;width:9.6px;height:9.6px;border-radius:5px;background:#fff;border:1px solid #b0b0b0"></div>
<div class="t" style="left:869.5px;top:244px;font-size:6.77px;color:#444">Формировать отчет при изменении настроек</div>
<div class="t" style="left:848.5px;top:259.5px;color:#1a56c4;text-decoration:underline">Все настройки</div><!--/MAIN-->

</div></body></html>
